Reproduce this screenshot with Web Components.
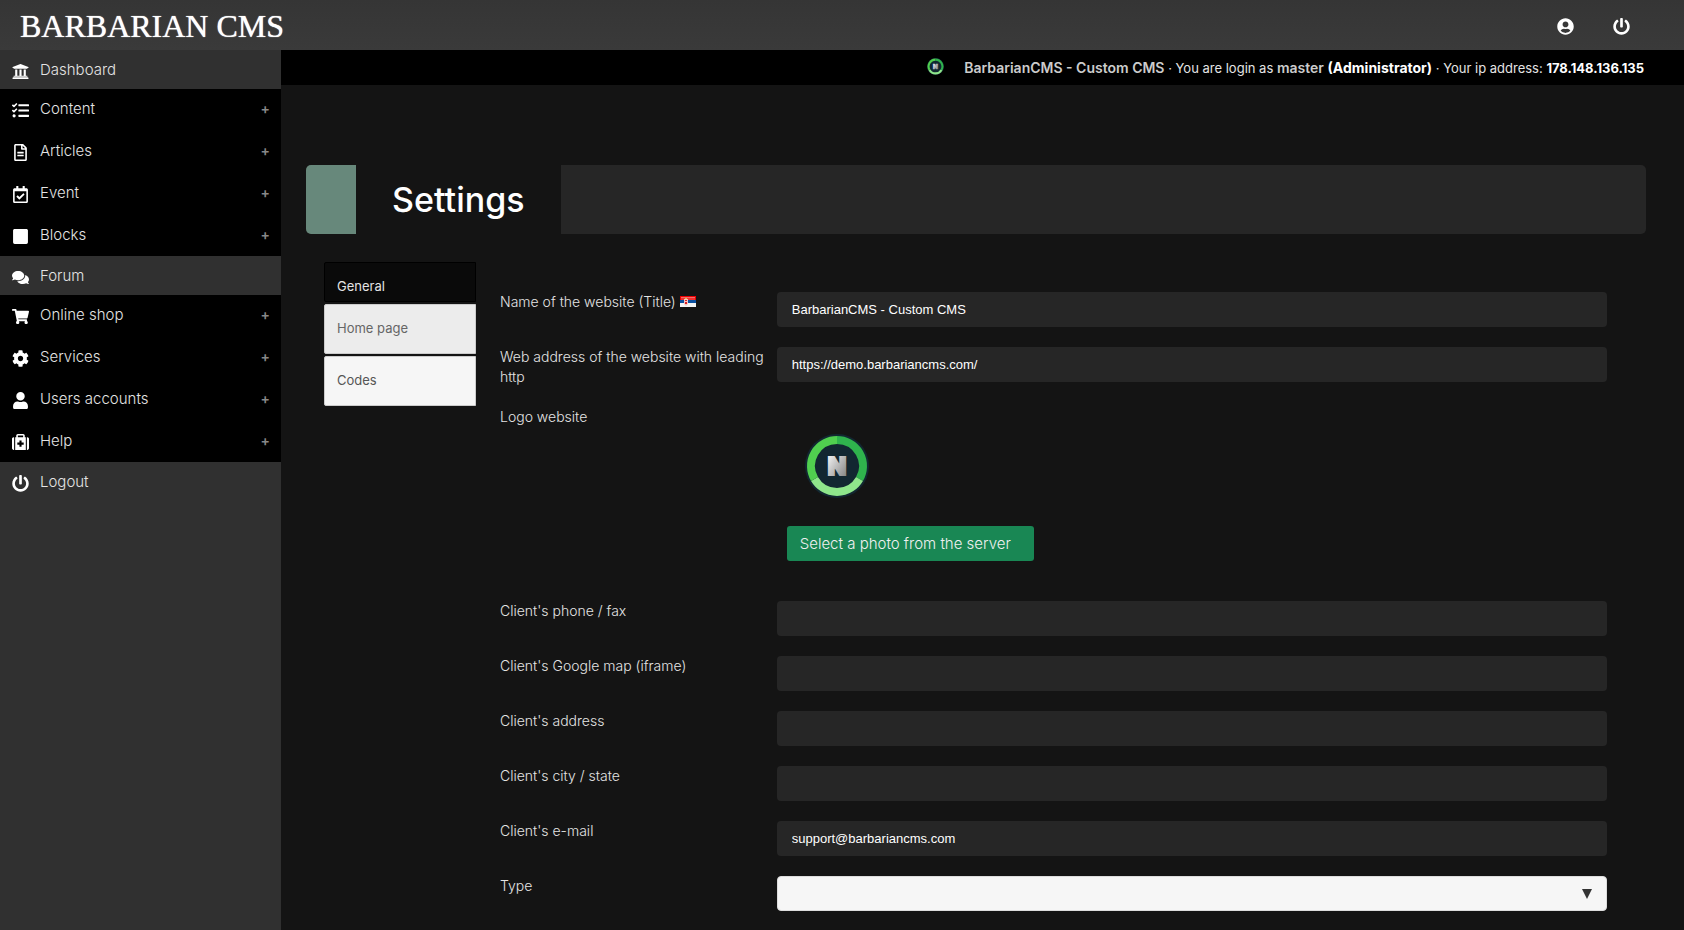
<!DOCTYPE html>
<html lang="en">
<head>
<meta charset="utf-8">
<meta name="viewport" content="width=device-width, initial-scale=1">
<title>Settings - Barbarian CMS</title>
<style>
  body {
    margin: 0;
    background: #141414;
    color: #e4e4e4;
    font-family: Inter, "Open Sans", sans-serif;
    font-size: 13px;
    font-weight: 400;
  }
</style>
</head>
<body>
<cms-app></cms-app>

<script>
  const ICONS = {
    bank: ['0 0 512 512', 'M496 128v16a8 8 0 0 1-8 8h-24v12c0 6.627-5.373 12-12 12H60c-6.627 0-12-5.373-12-12v-12H24a8 8 0 0 1-8-8v-16a8 8 0 0 1 4.941-7.392l232-88a7.996 7.996 0 0 1 6.118 0l232 88A8 8 0 0 1 496 128zm-24 304H40c-13.255 0-24 10.745-24 24v16a8 8 0 0 0 8 8h464a8 8 0 0 0 8-8v-16c0-13.255-10.745-24-24-24zM96 192v192H60c-6.627 0-12 5.373-12 12v20h416v-20c0-6.627-5.373-12-12-12h-36V192h-64v192h-64V192h-64v192h-64V192H96z'],
    tasks: ['0 0 512 512', 'M139.61 35.5a12 12 0 0 0-17 0L58.93 98.81l-22.7-22.12a12 12 0 0 0-17 0L3.53 92.41a12 12 0 0 0 0 17l47.59 47.4a12.78 12.78 0 0 0 17.61 0l15.59-15.62L156.52 69a12.09 12.09 0 0 0 .09-17zm0 159.19a12 12 0 0 0-17 0l-63.68 63.72-22.7-22.1a12 12 0 0 0-17 0L3.53 252a12 12 0 0 0 0 17L51 316.5a12.77 12.77 0 0 0 17.6 0l15.7-15.69 72.2-72.22a12 12 0 0 0 .09-16.9zM64 368c-26.49 0-48.59 21.5-48.59 48S37.53 464 64 464a48 48 0 0 0 0-96zm432 16H208a16 16 0 0 0-16 16v32a16 16 0 0 0 16 16h288a16 16 0 0 0 16-16v-32a16 16 0 0 0-16-16zm0-320H208a16 16 0 0 0-16 16v32a16 16 0 0 0 16 16h288a16 16 0 0 0 16-16V80a16 16 0 0 0-16-16zm0 160H208a16 16 0 0 0-16 16v32a16 16 0 0 0 16 16h288a16 16 0 0 0 16-16v-32a16 16 0 0 0-16-16z'],
    file: ['0 0 384 512', 'M288 248v28c0 6.6-5.4 12-12 12H108c-6.6 0-12-5.4-12-12v-28c0-6.6 5.4-12 12-12h168c6.6 0 12 5.4 12 12zm-12 72H108c-6.6 0-12 5.4-12 12v28c0 6.6 5.4 12 12 12h168c6.6 0 12-5.4 12-12v-28c0-6.6-5.4-12-12-12zm108-188.1V464c0 26.5-21.5 48-48 48H48c-26.5 0-48-21.5-48-48V48C0 21.5 21.5 0 48 0h204.1C264.8 0 277 5.1 286 14.1L369.9 98c9 8.9 14.1 21.2 14.1 33.9zm-128-80V128h76.1L256 51.9zM336 464V176H232c-13.3 0-24-10.7-24-24V48H48v416h288z'],
    calendar: ['0 0 448 512', 'M400 64h-48V12c0-6.627-5.373-12-12-12h-40c-6.627 0-12 5.373-12 12v52H160V12c0-6.627-5.373-12-12-12h-40c-6.627 0-12 5.373-12 12v52H48C21.49 64 0 85.49 0 112v352c0 26.51 21.49 48 48 48h352c26.51 0 48-21.49 48-48V112c0-26.51-21.49-48-48-48zm-6 400H54a6 6 0 0 1-6-6V160h352v298a6 6 0 0 1-6 6zm-52.849-200.65L198.842 404.519c-4.705 4.667-12.303 4.637-16.971-.068l-75.091-75.699c-4.667-4.705-4.637-12.303.068-16.971l22.719-22.536c4.705-4.667 12.303-4.637 16.97.069l44.104 44.461 111.072-110.181c4.705-4.667 12.303-4.637 16.971.068l22.536 22.718c4.667 4.705 4.636 12.303-.069 16.97z'],
    square: ['0 0 448 512', 'M400 32H48C21.5 32 0 53.5 0 80v352c0 26.5 21.5 48 48 48h352c26.5 0 48-21.5 48-48V80c0-26.5-21.5-48-48-48z'],
    comments: ['0 0 576 512', 'M416 192c0-88.4-93.1-160-208-160S0 103.6 0 192c0 34.3 14.1 65.9 38 92-13.4 30.2-35.5 54.2-35.8 54.5-2.2 2.3-2.8 5.7-1.5 8.7S4.8 352 8 352c36.6 0 66.9-12.3 88.7-25 32.2 15.7 70.3 25 111.3 25 114.9 0 208-71.6 208-160zm122 220c23.9-26 38-57.7 38-92 0-66.9-53.5-124.2-129.3-148.1.9 6.6 1.3 13.3 1.3 20.1 0 105.9-107.7 192-240 192-10.8 0-21.3-.8-31.7-1.9C207.8 439.6 281.8 480 368 480c41 0 79.1-9.2 111.3-25 21.8 12.7 52.1 25 88.7 25 3.2 0 6.1-1.9 7.3-4.8 1.3-2.9.7-6.3-1.5-8.7-.3-.3-22.4-24.2-35.8-54.5z'],
    cart: ['0 0 576 512', 'M528.12 301.319l47.273-208C578.806 78.301 567.391 64 551.99 64H159.208l-9.166-44.81C147.758 8.021 137.93 0 126.529 0H24C10.745 0 0 10.745 0 24v16c0 13.255 10.745 24 24 24h69.883l70.248 343.435C147.325 417.1 136 435.222 136 456c0 30.928 25.072 56 56 56s56-25.072 56-56c0-15.674-6.447-29.835-16.824-40h209.647C430.447 426.165 424 440.326 424 456c0 30.928 25.072 56 56 56s56-25.072 56-56c0-22.172-12.888-41.332-31.579-50.405l5.517-24.276c3.413-15.018-8.002-29.319-23.403-29.319H218.117l-6.545-32h293.145c11.206 0 20.92-7.754 23.403-18.681z'],
    cog: ['0 0 512 512', 'M487.4 315.7l-42.6-24.6c4.3-23.2 4.3-47 0-70.2l42.6-24.6c4.9-2.8 7.1-8.6 5.5-14-11.1-35.6-30-67.8-54.7-94.6-3.8-4.1-10-5.1-14.8-2.3L380.8 110c-17.9-15.4-38.5-27.3-60.8-35.1V25.8c0-5.6-3.9-10.5-9.4-11.7-36.7-8.2-74.3-7.8-109.2 0-5.5 1.2-9.4 6.1-9.4 11.7V75c-22.2 7.9-42.8 19.8-60.8 35.1L88.7 85.5c-4.9-2.8-11-1.9-14.8 2.3-24.7 26.7-43.6 58.9-54.7 94.6-1.7 5.4.6 11.2 5.5 14L67.3 221c-4.3 23.2-4.3 47 0 70.2l-42.6 24.6c-4.9 2.8-7.1 8.6-5.5 14 11.1 35.6 30 67.8 54.7 94.6 3.8 4.1 10 5.1 14.8 2.3l42.6-24.6c17.9 15.4 38.5 27.3 60.8 35.1v49.2c0 5.6 3.9 10.5 9.4 11.7 36.7 8.2 74.3 7.8 109.2 0 5.5-1.2 9.4-6.1 9.4-11.7v-49.2c22.2-7.9 42.8-19.8 60.8-35.1l42.6 24.6c4.9 2.8 11 1.9 14.8-2.3 24.7-26.7 43.6-58.9 54.7-94.6 1.5-5.5-.7-11.3-5.6-14.1zM256 336c-44.1 0-80-35.9-80-80s35.9-80 80-80 80 35.9 80 80-35.9 80-80 80z'],
    user: ['0 0 448 512', 'M224 256c70.7 0 128-57.3 128-128S294.7 0 224 0 96 57.3 96 128s57.3 128 128 128zm89.6 32h-16.7c-22.2 10.2-46.9 16-72.9 16s-50.6-5.8-72.9-16h-16.7C60.2 288 0 348.2 0 422.4V464c0 26.5 21.5 48 48 48h352c26.5 0 48-21.5 48-48v-41.6c0-74.2-60.2-134.4-134.4-134.4z'],
    medkit: ['0 0 512 512', 'M0 144c0-26 22-48 48-48h16v384H48c-26 0-48-22-48-48zM448 96h16c26 0 48 22 48 48v288c0 26-22 48-48 48h-16zM96 480V96h32V48c0-26 22-48 48-48h160c26 0 48 22 48 48v48h32v384zM176 48v48h160V48zM224 192v64h-64v64h64v64h64v-64h64v-64h-64v-64z'],
    power: ['0 0 512 512', 'M400 54.1c63 45 104 118.6 104 201.9 0 136.8-110.8 247.7-247.5 248C120 504.3 8.2 393 8 256.4 7.9 173.1 48.9 99.3 111.8 54.2c11.7-8.3 28-4.8 35 7.7L162.6 90c5.9 10.5 3.1 23.8-6.6 31-41.5 30.8-68 79.6-68 134.9-.1 92.3 74.5 168.1 168 168.1 91.6 0 168.6-74.2 168-169.1-.3-51.8-24.7-101.8-68.1-134-9.7-7.2-12.4-20.5-6.5-30.9l15.8-28.1c7-12.4 23.2-16.1 34.8-7.8zM296 264V24c0-13.3-10.7-24-24-24h-32c-13.3 0-24 10.7-24 24v240c0 13.3 10.7 24 24 24h32c13.3 0 24-10.7 24-24z'],
    account: ['0 0 496 512', 'M248 8C111 8 0 119 0 256s111 248 248 248 248-111 248-248S385 8 248 8zm0 96c48.6 0 88 39.4 88 88s-39.4 88-88 88-88-39.4-88-88 39.4-88 88-88zm0 344c-58.7 0-111.3-26.6-146.5-68.2 18.8-35.4 55.6-59.8 98.5-59.8 2.4 0 4.8.4 7.1 1.1 13 4.2 26.6 6.9 40.9 6.9 14.3 0 28-2.7 40.9-6.9 2.3-.7 4.7-1.1 7.1-1.1 42.9 0 79.7 24.4 98.5 59.8C359.3 421.4 306.7 448 248 448z']
  };

  class CmsIcon extends HTMLElement {
    constructor() {
      super();
      this.attachShadow({ mode: 'open' });
    }

    connectedCallback() {
      const [box, path] = ICONS[this.getAttribute('name')];
      this.shadowRoot.innerHTML = `
        <style>
          :host { display: block; width: 17px; height: 17px; color: #fff; }
          svg { display: block; width: 100%; height: 100%; }
        </style>
        <svg viewBox="${box}" aria-hidden="true"><path fill="currentColor" fill-rule="evenodd" d="${path}"/></svg>
      `;
    }
  }

  // Round site logo, scales with its host
  class SiteLogo extends HTMLElement {
    constructor() {
      super();
      this.attachShadow({ mode: 'open' });
      this.shadowRoot.innerHTML = `
        <style>
          :host { display: block; width: 64px; height: 64px; }
          svg { display: block; width: 100%; height: 100%; }
          text { font-family: Inter, sans-serif; font-weight: 900; font-size: 24px; stroke-width: 2px; }
        </style>
        <svg viewBox="0 0 64 64" role="img" aria-label="Site logo">
          <defs>
            <linearGradient id="metal" x1="0" y1="0" x2="1" y2="1">
              <stop offset="0.1" stop-color="#eee"/>
              <stop offset="0.9" stop-color="#888"/>
            </linearGradient>
          </defs>
          <circle cx="32" cy="32" r="32" fill="#122731"/>
          <g fill="none" stroke-width="8">
            <path stroke="#2fb34d" d="M32 6A26 26 0 0 1 54.5 45"/>
            <path stroke="#8fe68b" d="M54.5 45A26 26 0 0 1 9.5 45"/>
            <path stroke="#50cf4f" d="M9.5 45A26 26 0 0 1 32 6"/>
          </g>
          <text x="32" y="41" text-anchor="middle" fill="url(#metal)" stroke="url(#metal)">N</text>
        </svg>
      `;
    }
  }

  class FlagRs extends HTMLElement {
    constructor() {
      super();
      this.attachShadow({ mode: 'open' });
      this.shadowRoot.innerHTML = `
        <style>
          :host { display: inline-block; width: 16px; height: 11px; }
          svg { display: block; }
        </style>
        <svg width="16" height="11" viewBox="0 0 16 11" role="img" aria-label="Serbian">
          <path fill="#e00" d="M0 0h16v4H0z"/>
          <path fill="#f46b6b" d="M1 1h14v1H1z"/>
          <path fill="#e33" d="M1 2h14v2H1z"/>
          <path fill="#0b50a0" d="M0 4h16v3H0z"/>
          <path fill="#f5f5f5" d="M0 7h16v4H0z"/>
          <path fill="#f3c6c6" d="M4 3h4v5l-2 2-2-2z"/>
          <path fill="#d22" d="M5 4h2v1H5zM5 6h2v2H5z"/>
          <path fill="#e9b93c" d="M5 2h2v1H5z"/>
        </svg>
      `;
    }
  }

  class CmsHeader extends HTMLElement {
    constructor() {
      super();
      this.attachShadow({ mode: 'open' });
      this.shadowRoot.innerHTML = `
        <style>
          :host {
            box-sizing: border-box;
            display: flex;
            align-items: center;
            justify-content: space-between;
            height: 50px;
            padding: 3px 54px 0 20px;
            background: linear-gradient(#353535, #3a3a3a);
          }
          .brand {
            color: #fff;
            font-family: "Liberation Serif", serif;
            font-size: 32px;
            line-height: 47px;
            text-decoration: none;
            text-shadow: 0 0 1px #fff;
          }
          nav { display: flex; gap: 39px; }
        </style>
        <a class="brand" href="#">BARBARIAN CMS</a>
        <nav>
          <a href="#account" aria-label="Account"><cms-icon name="account"></cms-icon></a>
          <a href="#logout" aria-label="Log out"><cms-icon name="power"></cms-icon></a>
        </nav>
      `;
    }
  }

  class MenuItem extends HTMLElement {
    constructor() {
      super();
      this.attachShadow({ mode: 'open' });
    }

    connectedCallback() {
      this.shadowRoot.innerHTML = `
        <style>
          :host { display: block; }
          a {
            display: flex;
            align-items: center;
            gap: 11px;
            height: 39px;
            padding: 0 11px 0 12px;
            color: #e4e4e4;
            font-size: 15px;
            font-weight: 300;
            text-decoration: none;
          }
          :host([more]) a { height: 39px; padding-bottom: 2px; }
          cms-icon { margin-top: 3px; }
          .label { flex: 1; }
          .plus { color: #888; font-size: 14px; font-weight: 600; }
        </style>
        <a href="#">
          <cms-icon name="${this.getAttribute('icon')}"></cms-icon>
          <span class="label"><slot></slot></span>
          ${this.hasAttribute('more') ? '<span class="plus">+</span>' : ''}
        </a>
      `;
    }
  }

  class CmsSidebar extends HTMLElement {
    constructor() {
      super();
      this.attachShadow({ mode: 'open' });
      this.shadowRoot.innerHTML = `
        <style>
          :host { display: block; background: #303030; }
          .group {
            display: flex;
            flex-direction: column;
            gap: 1px;
            background: #000;
          }
        </style>
        <nav>
          <menu-item icon="bank">Dashboard</menu-item>
          <div class="group">
            <menu-item icon="tasks" more>Content</menu-item>
            <menu-item icon="file" more>Articles</menu-item>
            <menu-item icon="calendar" more>Event</menu-item>
            <menu-item icon="square" more>Blocks</menu-item>
          </div>
          <menu-item icon="comments">Forum</menu-item>
          <div class="group">
            <menu-item icon="cart" more>Online shop</menu-item>
            <menu-item icon="cog" more>Services</menu-item>
            <menu-item icon="user" more>Users accounts</menu-item>
            <menu-item icon="medkit" more>Help</menu-item>
          </div>
          <menu-item icon="power">Logout</menu-item>
        </nav>
      `;
    }
  }

  class StatusBar extends HTMLElement {
    constructor() {
      super();
      this.attachShadow({ mode: 'open' });
      this.shadowRoot.innerHTML = `
        <style>
          :host {
            display: flex;
            align-items: center;
            justify-content: flex-end;
            gap: 20px;
            height: 35px;
            padding: 0 40px;
            background: #000;
            font-size: 13px;
          }
          site-logo { width: 17px; height: 17px; margin-bottom: 3px; }
          a, .user { color: #ccc; font-size: 14px; font-weight: 600; text-decoration: none; }
          b { color: #fff; font-weight: 700; }
          .role { font-size: 14px; }
        </style>
        <site-logo></site-logo>
        <span><a href="#">BarbarianCMS - Custom CMS</a> · You are login as <span class="user">master</span> <b class="role">(Administrator)</b> · Your ip address: <b>178.148.136.135</b></span>
      `;
    }
  }

  class PageTitle extends HTMLElement {
    constructor() {
      super();
      this.attachShadow({ mode: 'open' });
      this.shadowRoot.innerHTML = `
        <style>
          :host {
            display: flex;
            height: 69px;
            overflow: hidden;
            border-radius: 5px;
            background: #262626;
          }
          .accent { width: 50px; background: #67887b; }
          h1 {
            margin: 0;
            padding: 0 36px;
            background: #141414;
            color: #fff;
            font-size: 34px;
            font-weight: 500;
            line-height: 69px;
          }
        </style>
        <div class="accent"></div>
        <h1><slot></slot></h1>
      `;
    }
  }

  class SettingsTabs extends HTMLElement {
    constructor() {
      super();
      this.attachShadow({ mode: 'open' });
      this.shadowRoot.innerHTML = `
        <style>
          :host { display: flex; flex-direction: column; gap: 2px; }
          button {
            height: 50px;
            padding: 0 12px 2px;
            border: 1px solid #ccc;
            border-radius: 2px 0 0 2px;
            background: #f6f6f6;
            color: #555;
            font: inherit;
            text-align: left;
          }
          .hover { background: #ececec; color: #666; }
          .active {
            height: 40px;
            padding-top: 10px;
            border-color: #000;
            background: #0a0a0a;
            color: #e4e4e4;
          }
        </style>
        <button class="active" type="button">General</button>
        <button class="hover" type="button">Home page</button>
        <button type="button">Codes</button>
      `;
    }
  }

  // One labelled row; type="select" gives a drop-down, otherwise a text box
  class SettingsField extends HTMLElement {
    constructor() {
      super();
      this.attachShadow({ mode: 'open' });
    }

    connectedCallback() {
      const control = this.getAttribute('type') === 'select'
        ? '<span class="drop"><select id="control"><option></option></select><svg width="12" height="10" viewBox="0 0 12 10" aria-hidden="true"><path fill="#333" d="M1 0h10L6 10z"/></svg></span>'
        : `<input id="control" type="text" value="${this.getAttribute('value') || ''}">`;

      this.shadowRoot.innerHTML = `
        <style>
          :host {
            display: grid;
            grid-template-columns: 1fr 3fr;
            align-items: start;
          }
          label { font-size: 14px; font-weight: 300; line-height: 20px; }
          input, select {
            box-sizing: border-box;
            width: 100%;
            height: 35px;
            padding: 0 15px;
            border: 0;
            border-radius: 4px;
            background: #262626;
            color: #fff;
            font-family: "Liberation Sans", Arial, sans-serif;
            font-size: 13px;
          }
          .drop { display: grid; align-items: center; justify-items: end; }
          .drop > * { grid-area: 1 / 1; }
          select {
            appearance: none;
            border: 1px solid #ddd;
            background: #f6f6f6;
            color: #333;
          }
          svg { margin-right: 14px; pointer-events: none; }
        </style>
        <label for="control"><slot></slot></label>
        ${control}
      `;
    }
  }

  class LogoField extends HTMLElement {
    constructor() {
      super();
      this.attachShadow({ mode: 'open' });
      this.shadowRoot.innerHTML = `
        <style>
          :host {
            display: grid;
            grid-template-columns: 1fr 3fr;
            align-items: start;
            font-size: 14px;
            font-weight: 300;
            line-height: 20px;
          }
          .picker {
            display: flex;
            flex-direction: column;
            align-items: flex-start;
            gap: 28px;
            padding: 27px 10px 20px;
          }
          site-logo { margin-left: 18px; }
          button {
            height: 35px;
            padding: 0 23px 0 13px;
            border: 0;
            border-radius: 3px;
            background: #198754;
            color: #f0f0f0;
            font: inherit;
            font-size: 15px;
          }
        </style>
        <span>Logo website</span>
        <div class="picker">
          <site-logo></site-logo>
          <button type="button">Select a photo from the server</button>
        </div>
      `;
    }
  }

  class SettingsForm extends HTMLElement {
    constructor() {
      super();
      this.attachShadow({ mode: 'open' });
      this.shadowRoot.innerHTML = `
        <style>
          :host { display: block; }
          form { display: flex; flex-direction: column; gap: 20px; }
        </style>
        <form>
          <settings-field value="BarbarianCMS - Custom CMS">Name of the website (Title) <flag-rs></flag-rs></settings-field>
          <settings-field value="https://demo.barbariancms.com/">Web address of the website with leading http</settings-field>
          <logo-field></logo-field>
          <settings-field>Client's phone / fax</settings-field>
          <settings-field>Client's Google map (iframe)</settings-field>
          <settings-field>Client's address</settings-field>
          <settings-field>Client's city / state</settings-field>
          <settings-field value="support@barbariancms.com">Client's e-mail</settings-field>
          <settings-field type="select">Type</settings-field>
        </form>
      `;
    }
  }

  class CmsApp extends HTMLElement {
    constructor() {
      super();
      this.attachShadow({ mode: 'open' });
      this.shadowRoot.innerHTML = `
        <style>
          :host {
            display: flex;
            flex-direction: column;
            min-height: 100vh;
          }
          .body {
            flex: 1;
            display: grid;
            grid-template-columns: 281px minmax(0, 1fr);
          }
          main { padding: 80px 38px 19px 25px; }
          .settings {
            display: grid;
            grid-template-columns: 152px minmax(0, 1fr);
            align-items: start;
            gap: 24px;
            padding: 28px 39px 0 18px;
          }
          settings-form { padding-top: 30px; }
        </style>
        <cms-header></cms-header>
        <div class="body">
          <cms-sidebar></cms-sidebar>
          <div>
            <status-bar></status-bar>
            <main>
              <page-title>Settings</page-title>
              <div class="settings">
                <settings-tabs></settings-tabs>
                <settings-form></settings-form>
              </div>
            </main>
          </div>
        </div>
      `;
    }
  }

  customElements.define('cms-icon', CmsIcon);
  customElements.define('site-logo', SiteLogo);
  customElements.define('flag-rs', FlagRs);
  customElements.define('cms-header', CmsHeader);
  customElements.define('menu-item', MenuItem);
  customElements.define('cms-sidebar', CmsSidebar);
  customElements.define('status-bar', StatusBar);
  customElements.define('page-title', PageTitle);
  customElements.define('settings-tabs', SettingsTabs);
  customElements.define('settings-field', SettingsField);
  customElements.define('logo-field', LogoField);
  customElements.define('settings-form', SettingsForm);
  customElements.define('cms-app', CmsApp);
</script>
</body>
</html>
